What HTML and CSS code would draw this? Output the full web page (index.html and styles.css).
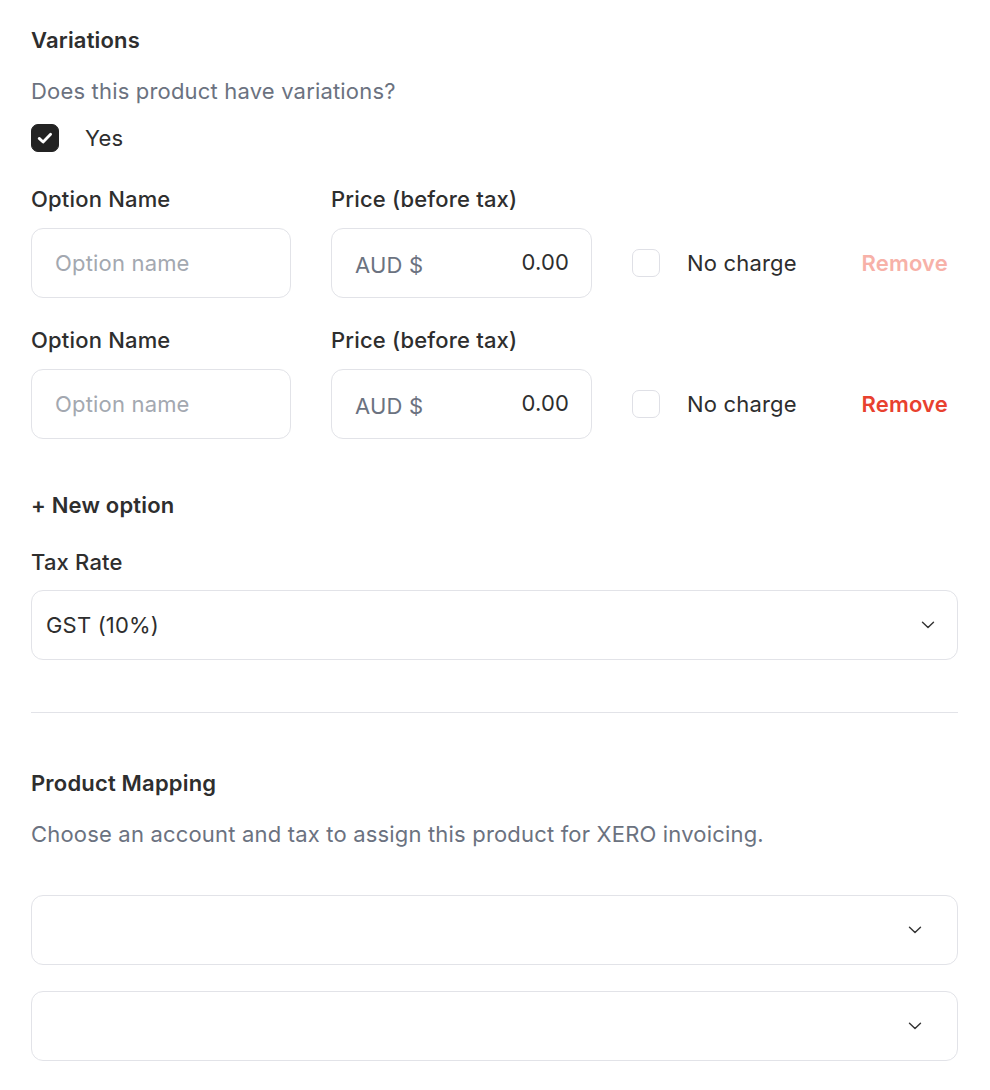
FILE: index.html
```html
<!DOCTYPE html>
<html>
<head>
<meta charset="utf-8">
<link rel="stylesheet" href="styles.css">
</head>
<body>
<div class="page">
  <section class="variations">
    <h2 class="title">Variations</h2>
    <p class="muted q">Does this product have variations?</p>
    <label class="check-row">
      <span class="box checked">
        <svg width="20" height="20" viewBox="0 0 20 20"><path d="M4.2 10.4 L8.1 14 L15.6 6.2" fill="none" stroke="#fff" stroke-width="2.8" stroke-linecap="round" stroke-linejoin="round"/></svg>
      </span>
      <span class="yes">Yes</span>
    </label>

    <div class="option">
      <div class="field name-field">
        <div class="label">Option Name</div>
        <div class="input"><span class="placeholder">Option name</span></div>
      </div>
      <div class="field price-field">
        <div class="label">Price (before tax)</div>
        <div class="input price"><span class="cur">AUD $</span><span class="val">0.00</span></div>
      </div>
      <div class="nocharge"><span class="box"></span><span>No charge</span></div>
      <div class="remove disabled">Remove</div>
    </div>

    <div class="option">
      <div class="field name-field">
        <div class="label">Option Name</div>
        <div class="input"><span class="placeholder">Option name</span></div>
      </div>
      <div class="field price-field">
        <div class="label">Price (before tax)</div>
        <div class="input price"><span class="cur">AUD $</span><span class="val">0.00</span></div>
      </div>
      <div class="nocharge"><span class="box"></span><span>No charge</span></div>
      <div class="remove">Remove</div>
    </div>

    <div class="new-option">+ New option</div>

    <div class="label tax-label">Tax Rate</div>
    <div class="select tax">
      <span>GST (10%)</span>
      <svg class="chev" width="14" height="14" viewBox="0 0 14 14"><path d="M1.5 4.2 L7 9.6 L12.5 4.2" fill="none" stroke="#333" stroke-width="1.4" stroke-linecap="round" stroke-linejoin="round"/></svg>
    </div>
  </section>

  <hr class="divider">

  <section class="mapping">
    <h2 class="title">Product Mapping</h2>
    <p class="muted desc">Choose an account and tax to assign this product for XERO invoicing.</p>
    <div class="select map first">
      <span></span>
      <svg class="chev" width="14" height="14" viewBox="0 0 14 14"><path d="M1.5 4.2 L7 9.6 L12.5 4.2" fill="none" stroke="#333" stroke-width="1.4" stroke-linecap="round" stroke-linejoin="round"/></svg>
    </div>
    <div class="select map">
      <span></span>
      <svg class="chev" width="14" height="14" viewBox="0 0 14 14"><path d="M1.5 4.2 L7 9.6 L12.5 4.2" fill="none" stroke="#333" stroke-width="1.4" stroke-linecap="round" stroke-linejoin="round"/></svg>
    </div>
  </section>
</div>
</body>
</html>
```

FILE: styles.css
```css
* { box-sizing: border-box; }
html, body { margin: 0; padding: 0; background: #fff; }
body {
  font-family: Inter, "Noto Sans", sans-serif;
  color: #2e2e2e;
  font-size: 22px;
  letter-spacing: 0.18px;
}
.page {
  width: 927px;
  margin-left: 31px;
  padding-top: 26px;
}
.title {
  margin: 0;
  font-size: 22px;
  font-weight: 600;
  line-height: 28px;
  color: #2e2e2e;
}
.muted {
  color: #6b7280;
  margin: 0;
  line-height: 28px;
}
.q { margin-top: 23px; }
.check-row {
  display: flex;
  align-items: center;
  margin-top: 19px;
}
.box {
  width: 28px;
  height: 28px;
  border-radius: 7px;
  border: 1px solid #dfe0e6;
  background: #fff;
  display: inline-flex;
  align-items: center;
  justify-content: center;
  flex: none;
}
.box.checked {
  background: #232323;
  border-color: #232323;
}
.yes { margin-left: 26px; line-height: 28px; }

.option {
  display: flex;
  align-items: flex-end;
  margin-top: 33px;
}
.option + .option { margin-top: 28px; }
.field { display: flex; flex-direction: column; }
.name-field { width: 260px; }
.price-field { width: 261px; margin-left: 40px; }
.label {
  font-weight: 500;
  line-height: 28px;
  color: #2e2e2e;
}
.input {
  margin-top: 15px;
  height: 70px;
  border: 1px solid #e2e3e8;
  border-radius: 12px;
  display: flex;
  align-items: center;
  padding: 0 22px 0 23px;
}
.placeholder { color: #a3a8b0; }
.price { justify-content: space-between; }
.cur { color: #6b7280; padding-top: 3px; }
.val { color: #2e2e2e; padding-bottom: 2px; }
.nocharge {
  height: 70px;
  display: flex;
  align-items: center;
  margin-left: 40px;
}
.nocharge .box { margin-right: 27px; }
.remove {
  height: 70px;
  display: flex;
  align-items: center;
  margin-left: auto;
  margin-right: 10px;
  font-weight: 600;
  color: #e8412f;
}
.remove.disabled { color: #f7b1a8; }

.new-option {
  margin-top: 52px;
  font-weight: 600;
  line-height: 28px;
}
.tax-label { margin-top: 29px; }
.select {
  height: 70px;
  border: 1px solid #e2e3e8;
  border-radius: 12px;
  display: flex;
  align-items: center;
  justify-content: space-between;
  padding: 0 22px 0 14px;
}
.tax { margin-top: 14px; }
.divider {
  border: 0;
  border-top: 1px solid #e2e3e8;
  margin: 52px 0 0 0;
}
.mapping { padding-top: 56px; }
.desc { margin-top: 23px; }
.select.map { padding-right: 35px; }
.map.first { margin-top: 47px; }
.map + .map { margin-top: 26px; }
```
